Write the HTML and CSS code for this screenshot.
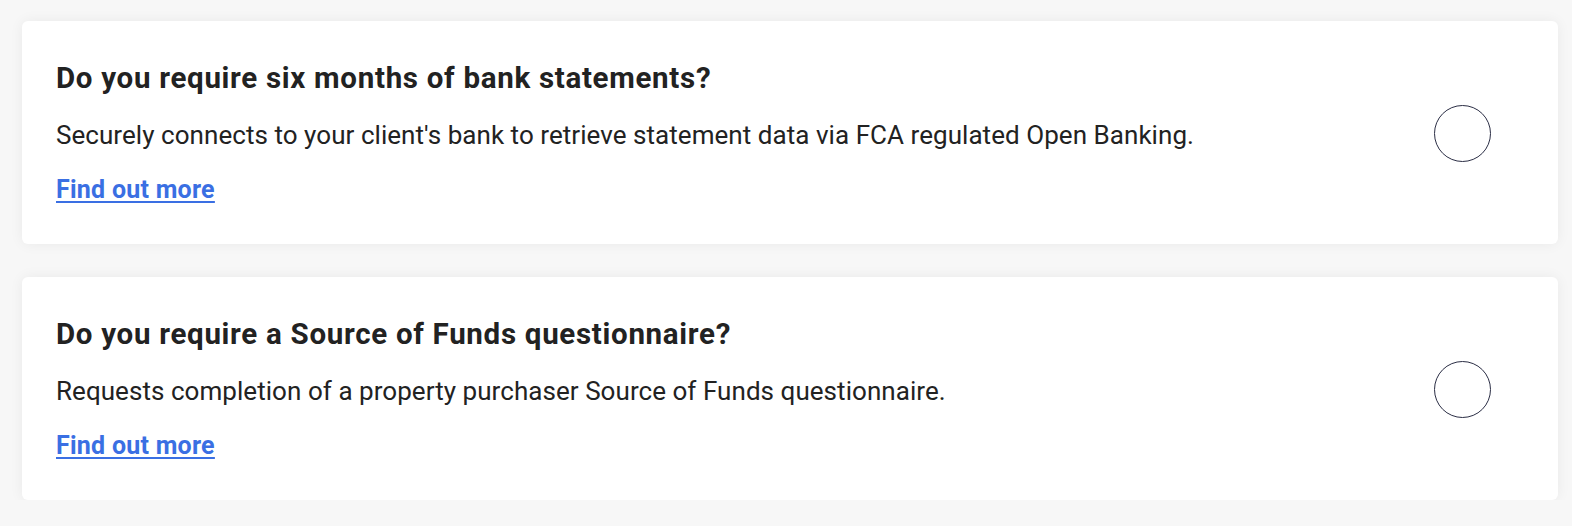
FILE: index.html
```html
<!DOCTYPE html>
<html lang="en">
<head>
<meta charset="utf-8">
<title>Options</title>
<link rel="stylesheet" href="styles.css">
</head>
<body>
<main class="list">
  <section class="card">
    <div class="card-text">
      <h2 class="title">Do you require six months of bank statements?</h2>
      <p class="desc">Securely connects to your client's bank to retrieve statement data via FCA regulated Open Banking.</p>
      <a class="more" href="#">Find out more</a>
    </div>
    <span class="radio"></span>
  </section>
  <section class="card">
    <div class="card-text">
      <h2 class="title">Do you require a Source of Funds questionnaire?</h2>
      <p class="desc">Requests completion of a property purchaser Source of Funds questionnaire.</p>
      <a class="more" href="#">Find out more</a>
    </div>
    <span class="radio"></span>
  </section>
</main>
</body>
</html>
```
FILE: styles.css
```css
html, body {
  margin: 0;
  padding: 0;
  background: #f7f7f7;
}
body {
  font-family: Roboto, "Liberation Sans", Arial, sans-serif;
  color: #222222;
}
.list {
  display: flex;
  flex-direction: column;
  gap: 33px;
  padding: 21px 14px 0 22px;
}
.card {
  display: flex;
  align-items: center;
  justify-content: space-between;
  height: 223px;
  box-sizing: border-box;
  padding: 2px 67px 0 34px;
  background: #ffffff;
  border-radius: 6px;
  box-shadow: 0 0 14px rgba(0, 0, 0, 0.06);
}
.card-text {
  display: flex;
  flex-direction: column;
  align-items: flex-start;
}
.title {
  margin: 0;
  font-size: 29.5px;
  font-weight: 700;
  line-height: 34px;
  letter-spacing: 0.7px;
  color: #222222;
}
.desc {
  margin: 23px 0 0;
  font-size: 26px;
  line-height: 34px;
  letter-spacing: 0.05px;
  color: #222222;
}
.more {
  margin-top: 22px;
  font-size: 25px;
  font-weight: 700;
  line-height: 32px;
  letter-spacing: 0.25px;
  color: #3a6fe3;
  text-decoration: underline;
  text-decoration-thickness: 2px;
  text-underline-offset: 3px;
}
.radio {
  width: 55px;
  height: 55px;
  border: 1.5px solid #2b2e45;
  border-radius: 50%;
  flex: none;
}
```
